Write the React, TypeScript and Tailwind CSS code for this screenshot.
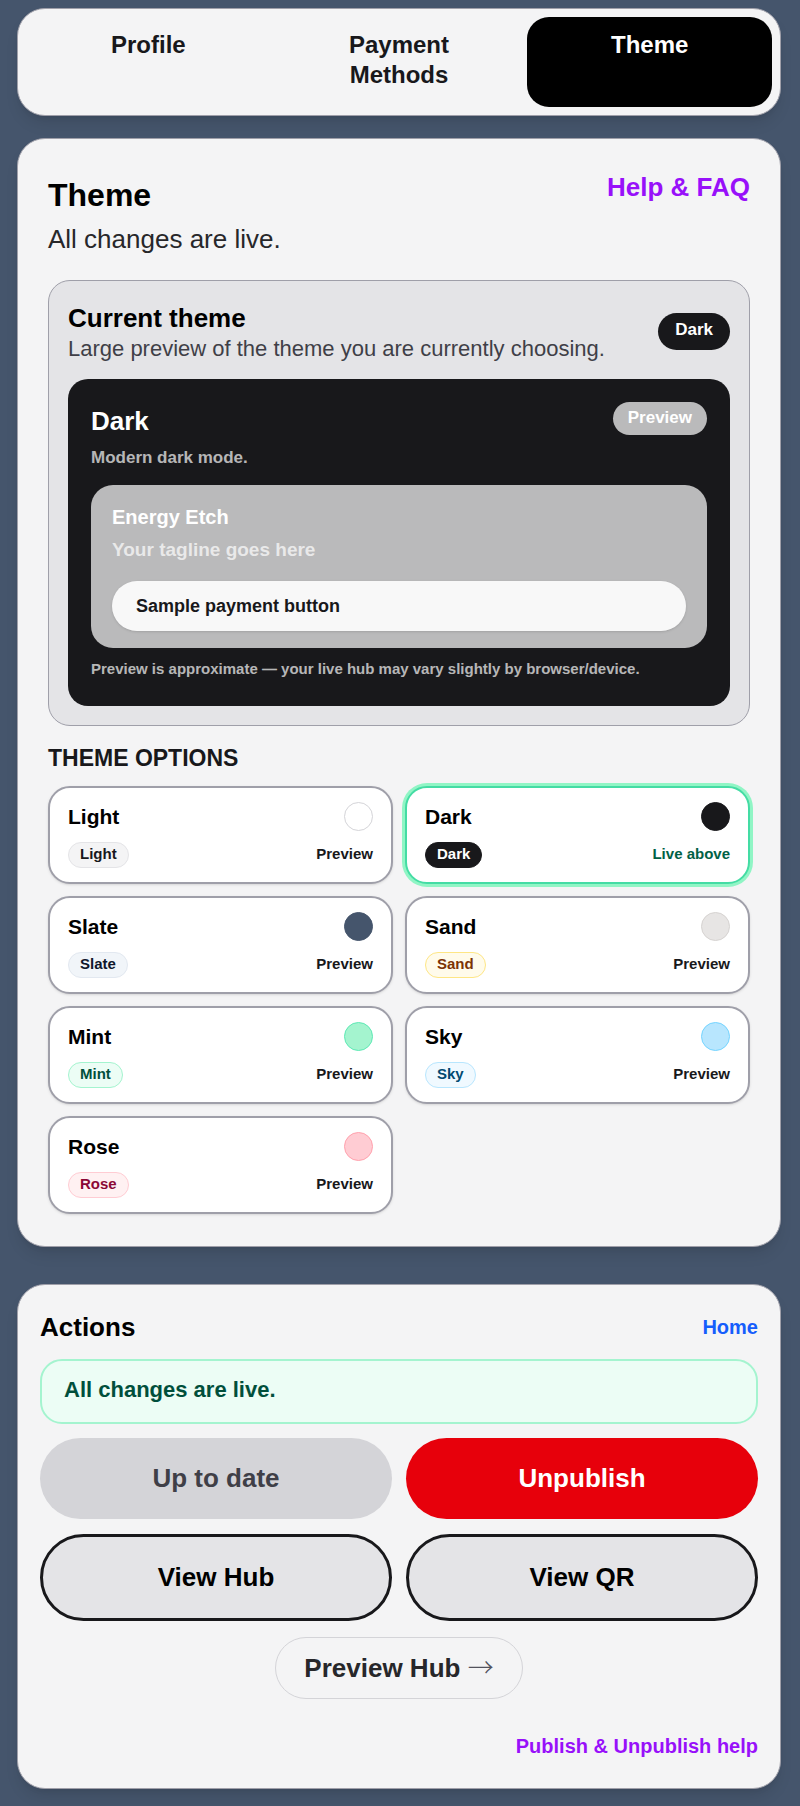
import { useState } from 'react';
import clsx from 'clsx';

const tabs = ['Profile', 'Payment Methods', 'Theme'];

const themes = [
    {
        name: 'Light',
        swatch: 'border-zinc-300 bg-white',
        badge: 'border-zinc-200 bg-zinc-100 text-zinc-900',
    },
    {
        name: 'Dark',
        swatch: 'border-zinc-900 bg-zinc-900',
        badge: 'border-zinc-900 bg-zinc-900 text-white',
    },
    {
        name: 'Slate',
        swatch: 'border-slate-600 bg-slate-600',
        badge: 'border-slate-200 bg-slate-100 text-slate-900',
    },
    {
        name: 'Sand',
        swatch: 'border-stone-300 bg-stone-200',
        badge: 'border-amber-200 bg-amber-50 text-amber-900',
    },
    {
        name: 'Mint',
        swatch: 'border-emerald-300 bg-emerald-200',
        badge: 'border-emerald-200 bg-emerald-50 text-emerald-900',
    },
    {
        name: 'Sky',
        swatch: 'border-sky-300 bg-sky-200',
        badge: 'border-sky-200 bg-sky-50 text-sky-900',
    },
    {
        name: 'Rose',
        swatch: 'border-rose-300 bg-rose-200',
        badge: 'border-rose-200 bg-rose-50 text-rose-900',
    },
];

export default function App() {
    return (
        <div className="flex min-h-screen flex-col bg-slate-600 pt-2 pr-[19px] pb-[17px] pl-[17px] font-['Liberation_Sans',Arial,sans-serif] text-black">
            <TabBar />
            <ThemePanel />
            <ActionsPanel />
        </div>
    );
}

export function TabBar() {
    const [tab, setTab] = useState('Theme');

    return (
        <nav className="grid grid-cols-3 gap-[6px] rounded-[28px] border border-zinc-400 bg-zinc-100 p-2 shadow-lg">
            {tabs.map((name) => (
                <button
                    key={name}
                    onClick={() => setTab(name)}
                    className={clsx(
                        'flex items-start justify-center rounded-[22px] px-8 pt-[13px] pb-[17px] text-center text-[24px] leading-[30px] font-bold',
                        tab === name ? 'bg-black text-white' : 'text-zinc-900',
                    )}
                >
                    {name}
                </button>
            ))}
        </nav>
    );
}

export function ThemePanel() {
    const [selected, setSelected] = useState('Dark');

    return (
        <main className="mt-[22px] rounded-[28px] border border-zinc-400 bg-zinc-100 px-[30px] pt-[30px] pb-8 shadow-lg">
            <div className="flex items-start justify-between">
                <div>
                    <h1 className="pt-1 text-[32px] leading-[44px] font-bold">Theme</h1>
                    <p className="text-[26px] leading-[44px] text-zinc-800">All changes are live.</p>
                </div>
                <a href="#help" className="text-[26px] leading-[36px] font-bold text-purple-600">
                    Help &amp; FAQ
                </a>
            </div>
            <CurrentTheme />
            <h2 className="mt-4 mb-3 text-[23px] leading-[32px] font-bold text-zinc-900">
                THEME OPTIONS
            </h2>
            <div className="grid grid-cols-2 gap-3">
                {themes.map((theme) => (
                    <ThemeOption
                        key={theme.name}
                        theme={theme}
                        active={theme.name === selected}
                        onSelect={() => setSelected(theme.name)}
                    />
                ))}
            </div>
        </main>
    );
}

export function CurrentTheme() {
    return (
        <section className="mt-[19px] rounded-[22px] border border-zinc-400 bg-zinc-200 p-[19px]">
            <div className="flex items-center justify-between">
                <div>
                    <h2 className="text-[26px] leading-[36px] font-bold">Current theme</h2>
                    <p className="text-[22px] leading-[26px] text-zinc-700">
                        Large preview of the theme you are currently choosing.
                    </p>
                </div>
                <span className="rounded-full bg-zinc-900 px-[17px] pt-[5px] pb-2 text-[17px] leading-[24px] font-bold text-white">
                    Dark
                </span>
            </div>
            <div className="mt-[17px] rounded-[20px] bg-zinc-900 px-[23px] pt-[23px] pb-[22px]">
                <div className="flex items-start justify-between">
                    <div>
                        <h3 className="text-[26px] leading-[38px] font-bold text-white">Dark</h3>
                        <p className="mt-[3px] text-[17px] leading-[30px] font-bold text-white/70">
                            Modern dark mode.
                        </p>
                    </div>
                    <span className="rounded-full bg-white/70 px-[15px] pt-1 pb-[5px] text-[17px] leading-[24px] font-bold text-white">
                        Preview
                    </span>
                </div>
                <div className="mt-3 rounded-[22px] bg-white/70 px-[21px] pt-[17px] pb-[17px]">
                    <p className="text-[20px] leading-[30px] font-bold text-white">Energy Etch</p>
                    <p className="mt-[3px] text-[19px] leading-[30px] font-bold text-white/70">
                        Your tagline goes here
                    </p>
                    <button className="mt-4 block w-full rounded-full bg-white/90 px-6 py-[10px] text-left text-[18px] leading-[30px] font-bold text-zinc-900 shadow-sm">
                        Sample payment button
                    </button>
                </div>
                <p className="mt-[6px] text-[15px] leading-[30px] font-bold text-white/70">
                    Preview is approximate — your live hub may vary slightly by browser/device.
                </p>
            </div>
        </section>
    );
}

type Theme = (typeof themes)[number];

export function ThemeOption({
    theme,
    active,
    onSelect,
}: {
    theme: Theme;
    active: boolean;
    onSelect: () => void;
}) {
    return (
        <button
            onClick={onSelect}
            className={clsx(
                'flex flex-col gap-[11px] rounded-[22px] border-2 bg-white px-[18px] py-[14px] text-left font-bold',
                active
                    ? 'border-[#44dca4] ring-3 ring-[#90f5c5]'
                    : 'border-zinc-400 shadow-sm',
            )}
        >
            <span className="flex w-full items-start justify-between">
                <span className="text-[21px] leading-[29px]">{theme.name}</span>
                <span className={clsx('size-[29px] rounded-full border', theme.swatch)} />
            </span>
            <span className="flex w-full items-start justify-between text-[15px] leading-[20px]">
                <span
                    className={clsx('rounded-full border px-[11px] pt-[1px] pb-[3px]', theme.badge)}
                >
                    {theme.name}
                </span>
                <span className={clsx('pt-[2px]', active ? 'text-emerald-800' : 'text-zinc-900')}>
                    {active ? 'Live above' : 'Preview'}
                </span>
            </span>
        </button>
    );
}

export function ActionsPanel() {
    return (
        <section className="mt-[37px] rounded-[28px] border border-zinc-400 bg-zinc-100 px-[22px] pt-[22px] pb-[27px] shadow-lg">
            <div className="flex items-center justify-between">
                <h2 className="text-[26px] leading-[40px] font-bold">Actions</h2>
                <a href="#home" className="text-[20px] leading-[30px] font-bold text-blue-600">
                    Home
                </a>
            </div>
            <p className="mt-3 rounded-[22px] border-2 border-emerald-200 bg-emerald-50 px-[22px] pt-[13px] pb-4 text-[22px] leading-[32px] font-bold text-emerald-900">
                All changes are live.
            </p>
            <div className="mt-[14px] grid grid-cols-2 gap-x-[14px] gap-y-[15px] text-[26px] leading-[37px] font-bold">
                <button disabled className="rounded-full bg-zinc-300 py-[22px] text-zinc-700">
                    Up to date
                </button>
                <button className="rounded-full bg-red-600 py-[22px] text-white">Unpublish</button>
                <button className="rounded-full border-3 border-zinc-900 bg-zinc-200 py-[22px]">
                    View Hub
                </button>
                <button className="rounded-full border-3 border-zinc-900 bg-zinc-200 py-[22px]">
                    View QR
                </button>
            </div>
            <div className="mt-4 flex justify-center">
                <button className="rounded-full border border-zinc-300 px-7 py-3 text-[26px] leading-[36px] font-bold text-zinc-800">
                    Preview Hub{' '}
                    <span className="font-['Noto_Sans_CJK_JP',sans-serif] leading-none font-light text-zinc-600">
                        →
                    </span>
                </button>
            </div>
            <div className="mt-8 flex justify-end">
                <a href="#publish-help" className="text-[20px] leading-[30px] font-bold text-purple-600">
                    Publish &amp; Unpublish help
                </a>
            </div>
        </section>
    );
}
